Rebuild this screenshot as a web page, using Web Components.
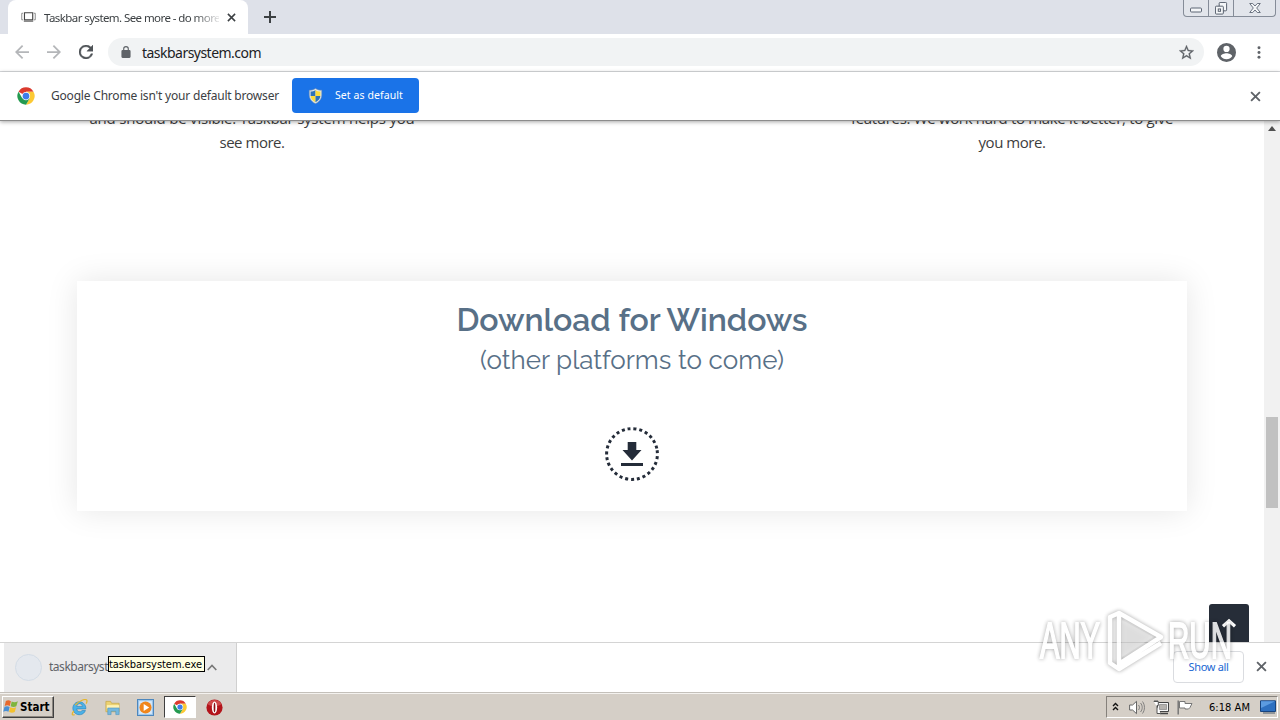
<!DOCTYPE html>
<html lang="en">
<head>
<meta charset="utf-8">
<title>Taskbar system. See more - do more</title>
<style>
  html, body { margin: 0; height: 100%; overflow: hidden; }
  body { font-family: "Noto Sans", "DejaVu Sans", sans-serif; }
</style>
</head>
<body>
<desktop-screen></desktop-screen>
<script>
const ICONS = {
  favicon: ['0 0 16 12', '<path d="M3.700 1.500h8.800v7.500H3.700z" fill="#fff" stroke="#444" stroke-width="1.200"/><path d="M3 10.500h10" stroke="#555"/><path d="M2.200 2H.8v7h1.400M13.800 2h1.400v7h-1.400" fill="none" stroke="#888"/>'],
  close: ['0 0 10 10', '<path d="M1 1l8 8M9 1L1 9" stroke="currentColor" stroke-width="1.7"/>'],
  plus: ['0 0 12 12', '<path d="M6 0v12M0 6h12" stroke="currentColor" stroke-width="2"/>'],
  back: ['4 4 16 16', '<path d="M20 11H7.830l5.590-5.590L12 4l-8 8 8 8 1.410-1.410L7.830 13H20z" fill="currentColor"/>'],
  forward: ['4 4 16 16', '<path d="M12 4l-1.410 1.410L16.170 11H4v2h12.170l-5.580 5.590L12 20l8-8z" fill="currentColor"/>'],
  reload: ['4 4 16 16', '<path d="M17.650 6.350A8 8 0 1 0 19.730 14h-2.080A6 6 0 1 1 12 6c1.660 0 3.140.69 4.220 1.780L13 11h7V4z" fill="currentColor" stroke="currentColor" stroke-width=".5"/>'],
  lock: ['4 1 16 21', '<path d="M18 8h-1V6A5 5 0 0 0 7 6v2H6a2 2 0 0 0-2 2v10a2 2 0 0 0 2 2h12a2 2 0 0 0 2-2V10a2 2 0 0 0-2-2zM9 8V6a3 3 0 0 1 6 0v2z" fill="currentColor"/>'],
  star: ['2 2 20 20', '<path d="M22 9.240l-7.190-.62L12 2 9.190 8.630 2 9.240l5.460 4.730L5.820 21 12 17.270 18.180 21l-1.630-7.030zM12 15.400l-3.760 2.270 1-4.280-3.320-2.880 4.380-.38L12 6.100l1.710 4.040 4.380.38-3.320 2.880 1 4.280z" fill="currentColor" stroke="currentColor" stroke-width=".3"/>'],
  avatar: ['2 2 20 20', '<path d="M12 2a10 10 0 1 0 0 20 10 10 0 0 0 0-20zm0 3a3.300 3.300 0 1 1 0 6.600A3.300 3.300 0 0 1 12 5zm0 14.200a7.200 7.200 0 0 1-6-3.220c.03-2 4-3.080 6-3.080s5.970 1.090 6 3.080a7.200 7.200 0 0 1-6 3.220z" fill="currentColor"/>'],
  dots: ['0 0 4 14', '<g fill="currentColor"><circle cx="2" cy="2" r="1.600"/><circle cx="2" cy="7" r="1.600"/><circle cx="2" cy="12" r="1.600"/></g>'],
  chrome: ['0 0 48 48', '<circle cx="24" cy="24" r="23" fill="#fff"/><path d="M24 24L4.080 12.500A23 23 0 0 1 43.920 12.500H24z" fill="#db3a2e"/><path d="M43.920 12.500A23 23 0 0 1 24 47L34 29.750 24 12.500z" fill="#fcc934"/><path d="M4.080 12.500A23 23 0 0 0 24 47l10-17.250H14z" fill="#249a50"/><circle cx="24" cy="24" r="11" fill="#fff"/><circle cx="24" cy="24" r="9" fill="#3d7de8"/>'],
  shield: ['0 0 16 18', '<path d="M8 .5c2.500 1.800 5 2 7 2v5c0 5-3 8-7 10-4-2-7-5-7-10v-5c2 0 4.500-.2 7-2z" fill="#dfe6ec" stroke="#7d92a8" stroke-width=".6"/><path d="M8 2.200V9H2.500V4C4.500 3.900 6.500 3.300 8 2.200z" fill="#2c72ba"/><path d="M8 2.200V9h5.500V4C11.500 3.900 9.500 3.300 8 2.200z" fill="#fbdc3c"/><path d="M8 9H2.500c.3 3.200 2.500 5.500 5.500 7z" fill="#fbdc3c"/><path d="M8 9h5.500c-.3 3.200-2.500 5.500-5.500 7z" fill="#2c72ba"/>'],
  minimize: ['0 0 12 6', '<rect x=".5" y="1" width="11" height="4" rx="1" fill="#f4f6f8" stroke="#5d6674"/>'],
  restore: ['0 0 14 14', '<g fill="#f4f6f8" stroke="#4f5866"><rect x="4.500" y=".5" width="8" height="9" rx="1"/><rect x=".5" y="4.500" width="8.500" height="8.500" rx="1"/><rect x="3.500" y="7.500" width="2.500" height="2.500"/></g>'],
  winclose: ['0 0 12 10', '<path d="M.7.5h3L6 3 8.300.5h3L7.700 5l3.600 4.500h-3L6 7 3.700 9.500h-3L4.300 5z" fill="#f4f6f8" stroke="#5f6876" stroke-width=".9"/>'],
  download: ['0 0 54 54', '<circle cx="27" cy="27" r="25.400" fill="none" stroke="#242c39" stroke-width="3" stroke-dasharray="3 2.911" transform="rotate(-8.500 27 27)"/><path d="M22.700 15h8.600v8H36.500L27 33.500 17.500 23h5.200zM16 36h22v3H16z" fill="#242c39"/>'],
  up: ['0 0 16 10', '<path d="M2 8.300L8 3l6 5.300" fill="none" stroke="currentColor" stroke-width="3.200"/>'],
  chevron: ['0 0 10 7', '<path d="M.7 6L5 1.500 9.300 6" fill="none" stroke="currentColor" stroke-width="1.600"/>'],
  flagwin: ['0 0 18 17', '<path d="M3 2.200c2-1.200 3.500-1 5.400.1L7.200 7.500C5.500 6.500 3.700 6.500 1.800 7.500z" fill="#e8692d"/><path d="M9.200 2.700c2 1.200 4 1.100 6.500-.2l-1.600 5.200c-2 1.100-4 1-6 0z" fill="#7fb53c"/><path d="M1.600 8.300c2-1 3.700-.9 5.400.1l-1.200 5.100c-1.800-1.200-3.600-1.100-5.500 0z" fill="#4a8fd4"/><path d="M7.700 8.700c2.200 1 4 1 6.200 0l-1.500 5c-2 1.100-4 1.100-6-.2z" fill="#f3c12f"/>'],
  ie: ['0 0 18 18', '<path d="M15.700 10.500H6a3.200 3.200 0 0 0 5.800 1.700h3.500A6.900 6.900 0 1 1 15.700 10.500zM6.100 7.900h6a3 3 0 0 0-6 0z" fill="#4bb2e8" stroke="#1f7dba" stroke-width=".6"/><path d="M3 12.700C.3 16 1 17.700 3.800 16.600M4.500 6.300C9 1.700 15.200-.6 16.700 1.200c.5.900.2 2.200-.6 3.700" fill="none" stroke="#e5b62d" stroke-width="1.300"/>'],
  explorer: ['0 0 18 17', '<path d="M2 2h5l1 2h8v9H2z" fill="#ecd272" stroke="#c4a343" stroke-width=".7"/><path d="M3 6h13v4H3z" fill="#fff3b4"/><path d="M4 9h12v7h-3.500v-3.500h-5V16H4z" fill="#75b8de" stroke="#4b91bd" stroke-width=".6"/>'],
  media: ['0 0 16 16', '<path d="M.5.5h15v15H.5z" fill="#9fc9ee" stroke="#4d87bd"/><path d="M2 2h12v12H2z" fill="#d7eafa"/><circle cx="8" cy="8" r="5.700" fill="#f0861c"/><path d="M6.300 4.800L11.500 8l-5.200 3.200z" fill="#fff"/>'],
  opera: ['0 0 16 16', '<circle cx="8" cy="8" r="7.600" fill="#b3141b"/><path d="M1.500 5a7.200 7.200 0 0 1 13 0c-3 2.500-10 2.500-13 0z" fill="#cf4a4b"/><ellipse cx="8" cy="8" rx="2.500" ry="5.700" fill="#fff"/><ellipse cx="8" cy="8" rx=".8" ry="4.500" fill="#8d1016"/>'],
  more: ['0 0 7 9', '<path d="M1 4l2.500-2.500L6 4M1 8l2.500-2.500L6 8" fill="none" stroke="#111" stroke-width="1.400"/>'],
  speaker: ['0 0 16 14', '<path d="M.6 4.500h3L7.500.8v12.400L3.600 9.500h-3z" fill="#fff" stroke="#666"/><path d="M9.500 4.500c1.300 1.500 1.300 3.500 0 5M11.500 2.500c2.300 2.600 2.300 6.400 0 9M13.500 1c2.600 3.500 2.600 8.500 0 12" fill="none" stroke="#777" stroke-width=".9"/>'],
  network: ['0 0 16 15', '<path d="M4.500 2.500h11v9h-11z" fill="#f4f4f4" stroke="#444"/><path d="M6.500 4.500h7v5h-7z" fill="#b5b2ae" stroke="#777" stroke-width=".6"/><path d="M7 13.500h8" stroke="#444" stroke-width="1.500"/><path d="M.7 1.500h4.600v4H4v8h3.500v-1" fill="#fff" stroke="#555"/><path d="M2 0v1.500M4 0v1.500" stroke="#555"/>'],
  flag: ['0 0 16 15', '<path d="M1.200.5v14" stroke="#777" stroke-width="1.500"/><path d="M2.500 1.500h5.500v2h7l-2 4-1.500 1.500H8V8H2.500z" fill="#fff" stroke="#777"/>'],
  monitor: ['0 0 16 14', '<path d="M.5.8h15v10.700H.5z" fill="#2e70c0" stroke="#17447f"/><path d="M1 1.300h14L1 8z" fill="#5c9be0"/><path d="M3 13h12" stroke="#6b7680" stroke-width="1.300"/>']
};

class UiIcon extends HTMLElement {
  constructor() {
    super();
    this.attachShadow({ mode: 'open' });
  }
  connectedCallback() {
    const [box, body] = ICONS[this.getAttribute('name')];
    this.shadowRoot.innerHTML = `
      <style>
        :host { display: block; flex: none; }
        svg { display: block; width: 100%; height: 100%; }
      </style>
      <svg viewBox="${box}">${body}</svg>
    `;
  }
}
customElements.define('ui-icon', UiIcon);

// Spreads one line of text over a given width by its letter spacing
class FitText extends HTMLElement {
  constructor() {
    super();
    this.attachShadow({ mode: 'open' });
    this.shadowRoot.innerHTML = `
      <style>
        :host { display: block; flex: none; white-space: nowrap; }
        span { display: inline-block; }
      </style>
      <span><slot></slot></span>
    `;
  }
  connectedCallback() {
    const width = Number(this.getAttribute('width'));
    const span = this.shadowRoot.querySelector('span');
    const count = this.textContent.length;
    const natural = span.getBoundingClientRect().width;
    this.style.width = width + 'px';
    span.style.letterSpacing = ((width - natural) / count) + 'px';
  }
}
customElements.define('fit-text', FitText);

class TabStrip extends HTMLElement {
  constructor() {
    super();
    this.attachShadow({ mode: 'open' });
    this.shadowRoot.innerHTML = `
      <style>
        :host { display: flex; height: 34px; background: #dee1e9; padding-left: 8px; box-sizing: border-box; }
        .tab {
          display: flex; align-items: center; width: 240px; height: 34px; box-sizing: border-box;
          padding-left: 13px; background: #fff; border-radius: 8px 8px 0 0; color: #3c4043;
        }
        .title {
          width: 175px; margin-left: 8px; margin-right: 8px; overflow: hidden; font-size: 11.500px;
          -webkit-mask-image: linear-gradient(90deg, #000 150px, transparent 178px);
        }
        .controls {
          display: flex; height: 17px; margin-left: auto; margin-right: 4px; box-sizing: border-box;
          border: 1px solid #858c98; border-top: 0; border-radius: 0 0 4px 4px; background: #e2e5eb;
        }
        .controls div { display: flex; align-items: center; justify-content: center; width: 24px; border-right: 1px solid #858c98; }
        .controls div:last-child { width: 41px; border: 0; }
        .fav { width: 15px; height: 12px; }
        .x { width: 9px; height: 9px; }
        .plus { width: 12px; height: 12px; margin: 11px 0 0 16px; color: #3c4043; }
        .min { width: 12px; height: 6px; margin-top: 4px; }
        .res { width: 13px; height: 13px; }
        .wx { width: 12px; height: 10px; }
      </style>
      <div class="tab">
        <ui-icon class="fav" name="favicon"></ui-icon>
        <div class="title"><fit-text width="176">Taskbar system. See more - do more</fit-text></div>
        <ui-icon class="x" name="close"></ui-icon>
      </div>
      <ui-icon class="plus" name="plus"></ui-icon>
      <div class="controls">
        <div><ui-icon class="min" name="minimize"></ui-icon></div>
        <div><ui-icon class="res" name="restore"></ui-icon></div>
        <div><ui-icon class="wx" name="winclose"></ui-icon></div>
      </div>
    `;
  }
}
customElements.define('tab-strip', TabStrip);

class BrowserToolbar extends HTMLElement {
  constructor() {
    super();
    this.attachShadow({ mode: 'open' });
    this.shadowRoot.innerHTML = `
      <style>
        :host {
          display: flex; align-items: center; height: 38px; box-sizing: border-box; padding: 0 0 1px 15px;
          background: #fff; border-bottom: 1px solid #d9dbde; color: #5f6368;
        }
        .nav { width: 14px; height: 14px; margin-right: 18px; color: #b4b6b9; }
        .reload { width: 14px; height: 14px; color: #4f5357; }
        .omnibox {
          display: flex; align-items: center; width: 1096px; height: 28px; box-sizing: border-box;
          margin-left: 15px; padding: 0 10px 0 13px; border-radius: 14px; background: #f1f3f4;
        }
        .lock { width: 10px; height: 12px; }
        fit-text { margin-left: 11px; font-size: 14px; color: #202124; }
        .star { width: 15px; height: 15px; margin-left: auto; }
        .avatar { width: 19px; height: 19px; margin-left: 13px; }
        .dots { width: 4px; height: 13px; margin-left: 21px; }
      </style>
      <ui-icon class="nav" name="back"></ui-icon>
      <ui-icon class="nav" name="forward"></ui-icon>
      <ui-icon class="reload" name="reload"></ui-icon>
      <div class="omnibox">
        <ui-icon class="lock" name="lock"></ui-icon>
        <fit-text width="119">taskbarsystem.com</fit-text>
        <ui-icon class="star" name="star"></ui-icon>
      </div>
      <ui-icon class="avatar" name="avatar"></ui-icon>
      <ui-icon class="dots" name="dots"></ui-icon>
    `;
  }
}
customElements.define('browser-toolbar', BrowserToolbar);

class InfoBar extends HTMLElement {
  constructor() {
    super();
    this.attachShadow({ mode: 'open' });
    this.shadowRoot.innerHTML = `
      <style>
        :host {
          display: flex; align-items: center; position: relative; height: 49px; box-sizing: border-box;
          padding: 0 19px 0 17px; background: #fff; border-bottom: 1px solid #8c8c8c;
          box-shadow: 0 1px 4px rgba(0, 0, 0, .35); font-size: 12px; color: #3c4043;
        }
        .logo { width: 18px; height: 18px; margin-right: 16px; }
        .text { margin-bottom: 2px; }
        button {
          display: flex; align-items: center; width: 127px; height: 35px; margin: 0 0 1px 13px; padding: 0 0 0 16px;
          border: 0; border-radius: 4px; background: #1a73e8; color: #fff; font: 10.500px "Noto Sans", sans-serif;
        }
        .shield { width: 15px; height: 16px; margin-right: 12px; }
        button fit-text { margin-bottom: 1px; }
        .x { width: 11px; height: 11px; margin-left: auto; color: #5f6368; }
      </style>
      <ui-icon class="logo" name="chrome"></ui-icon>
      <fit-text class="text" width="228">Google Chrome isn't your default browser</fit-text>
      <button><ui-icon class="shield" name="shield"></ui-icon><fit-text width="68">Set as default</fit-text></button>
      <ui-icon class="x" name="close"></ui-icon>
    `;
  }
}
customElements.define('info-bar', InfoBar);

class FeatureText extends HTMLElement {
  constructor() {
    super();
    this.attachShadow({ mode: 'open' });
    this.shadowRoot.innerHTML = `
      <style>
        :host {
          display: flex; flex-direction: column; align-items: center; width: 380px;
          font: 15px/24px "Open Sans", "Noto Sans", sans-serif; color: #3d3d3d;
        }
      </style>
      <slot></slot>
    `;
  }
}
customElements.define('feature-text', FeatureText);

class DownloadCard extends HTMLElement {
  constructor() {
    super();
    this.attachShadow({ mode: 'open' });
    this.shadowRoot.innerHTML = `
      <style>
        :host {
          display: flex; flex-direction: column; align-items: center; width: 1110px; height: 230px; box-sizing: border-box;
          padding-top: 19px; background: #fff; box-shadow: 0 0 30px rgba(0, 0, 0, .1);
          font-family: Raleway, Lato, "Open Sans", sans-serif; color: #587087;
        }
        .title { font-size: 32px; line-height: 40px; font-weight: 600; }
        .sub { font-size: 26px; line-height: 40px; }
        ui-icon { width: 54px; height: 54px; margin-top: 47px; }
      </style>
      <fit-text class="title" width="351">Download for Windows</fit-text>
      <fit-text class="sub" width="304">(other platforms to come)</fit-text>
      <ui-icon name="download"></ui-icon>
    `;
  }
}
customElements.define('download-card', DownloadCard);

class ScrollBar extends HTMLElement {
  constructor() {
    super();
    this.attachShadow({ mode: 'open' });
    this.shadowRoot.innerHTML = `
      <style>
        :host { display: flex; flex-direction: column; align-items: center; width: 16px; background: #f1f1f1; }
        .arrow { border: 4px solid transparent; border-top: 0; border-bottom: 5px solid #505050; margin-top: 5px; }
        .thumb { width: 12px; height: 91px; margin-top: 286px; background: #c1c1c1; }
      </style>
      <div class="arrow"></div>
      <div class="thumb"></div>
    `;
  }
}
customElements.define('scroll-bar', ScrollBar);

class WebPage extends HTMLElement {
  constructor() {
    super();
    this.attachShadow({ mode: 'open' });
    this.shadowRoot.innerHTML = `
      <style>
        :host { display: flex; position: relative; height: 521px; overflow: hidden; background: #fff; }
        main { width: 1264px; display: flex; flex-direction: column; align-items: center; }
        .features { display: flex; justify-content: space-between; width: 1140px; margin: -15px 0 127px; }
        .top {
          position: absolute; left: 1209px; top: 483px; width: 40px; height: 40px; padding: 14px 0 0 12px;
          box-sizing: border-box; border-radius: 3px 3px 0 0; background: #262d38; color: #fff;
        }
        .top ui-icon { width: 16px; height: 10px; }
      </style>
      <main>
        <div class="features">
          <feature-text>
            <fit-text width="325">and should be visible. Taskbar system helps you</fit-text>
            <fit-text width="65">see more.</fit-text>
          </feature-text>
          <feature-text>
            <fit-text width="322">features. We work hard to make it better, to give</fit-text>
            <fit-text width="67">you more.</fit-text>
          </feature-text>
        </div>
        <download-card></download-card>
      </main>
      <scroll-bar></scroll-bar>
      <div class="top"><ui-icon name="up"></ui-icon></div>
    `;
  }
}
customElements.define('web-page', WebPage);

class DownloadShelf extends HTMLElement {
  constructor() {
    super();
    this.attachShadow({ mode: 'open' });
    this.shadowRoot.innerHTML = `
      <style>
        :host {
          display: flex; align-items: center; position: relative; height: 50px; box-sizing: border-box;
          padding: 0 13px 0 4px; background: #fff; border-top: 1px solid #d4d4d4; color: #5f6368;
        }
        .item {
          display: flex; align-items: center; width: 233px; height: 49px; box-sizing: border-box; padding: 0 0 1px 11px;
          background: #ebebec; border-right: 1px solid #d0d0d0; font-size: 12px;
        }
        .item fit-text { margin-bottom: 1px; }
        .ring { width: 27px; height: 27px; box-sizing: border-box; border: 1.500px solid #d3dce6; border-radius: 50%; background: #e4e8ee; margin-right: 7px; }
        .chev { width: 10px; height: 7px; margin-left: 99px; color: #777; }
        .all {
          display: flex; align-items: center; justify-content: center; width: 71px; height: 32px; box-sizing: border-box;
          margin-left: auto; margin-bottom: 2px; padding-bottom: 1px; border: 1px solid #dadce0; border-radius: 4px; color: #1967d2; font-size: 11px;
        }
        .x { width: 11px; height: 11px; margin: 0 0 2px 12px; }
        .tip {
          position: absolute; left: 108px; top: 13px; width: 97px; height: 16px; box-sizing: border-box;
          border: 1px solid #000; background: #ffffe1; color: #000; font: 11px/15px "DejaVu Sans Condensed", "DejaVu Sans", sans-serif;
        }
      </style>
      <div class="item">
        <div class="ring"></div>
        <fit-text width="59">taskbarsyst</fit-text>
        <ui-icon class="chev" name="chevron"></ui-icon>
      </div>
      <div class="all"><fit-text width="40">Show all</fit-text></div>
      <ui-icon class="x" name="close"></ui-icon>
      <div class="tip"><fit-text width="93">taskbarsystem.exe</fit-text></div>
    `;
  }
}
customElements.define('download-shelf', DownloadShelf);

class DesktopTaskbar extends HTMLElement {
  constructor() {
    super();
    this.attachShadow({ mode: 'open' });
    this.shadowRoot.innerHTML = `
      <style>
        :host {
          display: flex; align-items: center; height: 28px; box-sizing: border-box; padding: 1px 2px 0;
          background: #d5cfc7; border-top: 1px solid #c4c0ba; box-shadow: inset 0 1px #f4f2ef;
          font-family: "DejaVu Sans Condensed", "DejaVu Sans", sans-serif; font-size: 11.500px; color: #000;
        }
        .start {
          display: flex; align-items: center; width: 52px; height: 22px; box-sizing: border-box; font-weight: 700;
          border: 1px solid; border-color: #fff #404040 #404040 #fff; box-shadow: inset -1px -1px #8c8780;
        }
        .start ui-icon { width: 17px; height: 18px; }
        .apps { display: flex; align-items: center; margin-left: 17px; }
        .apps ui-icon { width: 17px; height: 17px; margin-right: 16px; }
        .active {
          display: flex; align-items: center; justify-content: center; width: 32px; height: 22px; box-sizing: border-box;
          margin: 0 10px 0 -6px; background: #fff; border: 1px solid; border-color: #404040 #fff #fff #404040;
        }
        .active ui-icon { width: 14px; height: 14px; margin: 0; }
        .tray {
          display: flex; align-items: center; width: 172px; height: 22px; box-sizing: border-box; margin-left: auto; padding-left: 5px;
          border: 1px solid; border-color: #85817b #fff #fff #85817b;
        }
        .more { width: 7px; height: 9px; margin: 0 10px 2px 0; }
        .tray .s { width: 16px; height: 15px; margin-right: 8px; }
        .clock { margin: 0 10px 0 8px; font-size: 11px; }
        .mon { width: 16px; height: 14px; }
      </style>
      <div class="start"><ui-icon name="flagwin"></ui-icon><fit-text width="29.500">Start</fit-text></div>
      <div class="apps">
        <ui-icon name="ie"></ui-icon>
        <ui-icon name="explorer"></ui-icon>
        <ui-icon name="media"></ui-icon>
        <div class="active"><ui-icon name="chrome"></ui-icon></div>
        <ui-icon name="opera"></ui-icon>
      </div>
      <div class="tray">
        <ui-icon class="more" name="more"></ui-icon>
        <ui-icon class="s" name="speaker"></ui-icon>
        <ui-icon class="s" name="network"></ui-icon>
        <ui-icon class="s" name="flag"></ui-icon>
        <fit-text class="clock" width="41">6:18 AM</fit-text>
        <ui-icon class="mon" name="monitor"></ui-icon>
      </div>
    `;
  }
}
customElements.define('desktop-taskbar', DesktopTaskbar);

class WaterMark extends HTMLElement {
  constructor() {
    super();
    this.attachShadow({ mode: 'open' });
    this.shadowRoot.innerHTML = `
      <style>
        :host { display: block; position: absolute; left: 1034px; top: 604px; width: 204px; height: 72px; pointer-events: none; opacity: .85; }
        svg { display: block; overflow: visible; filter: drop-shadow(0 0 2px rgba(0, 0, 0, .42)); }
        text { font: 50px "Liberation Sans", sans-serif; stroke: #fff; stroke-width: 1.800px; }
      </style>
      <svg width="204" height="72" fill="#fff">
        <text x="6" y="54" textLength="60" lengthAdjust="spacingAndGlyphs">ANY</text>
        <text x="134" y="54" textLength="64" lengthAdjust="spacingAndGlyphs">RUN</text>
        <g fill="none" stroke="#fff" stroke-width="4.500" stroke-linejoin="round">
          <path d="M85 9l42 24-42 27zM85 9l-9 4v46l9 6 42-26"/>
          <path d="M85 21v27" stroke-width="3"/>
        </g>
        <path d="M88 16l31 17-31 20z" fill="#e6e6e6" fill-opacity=".5"/>
      </svg>
    `;
  }
}
customElements.define('water-mark', WaterMark);

class DesktopScreen extends HTMLElement {
  constructor() {
    super();
    this.attachShadow({ mode: 'open' });
    this.shadowRoot.innerHTML = `
      <style>
        :host { display: flex; flex-direction: column; position: relative; width: 1280px; height: 720px; overflow: hidden; }
        info-bar { z-index: 1; }
      </style>
      <tab-strip></tab-strip>
      <browser-toolbar></browser-toolbar>
      <info-bar></info-bar>
      <web-page></web-page>
      <download-shelf></download-shelf>
      <desktop-taskbar></desktop-taskbar>
      <water-mark></water-mark>
    `;
  }
}
customElements.define('desktop-screen', DesktopScreen);
</script>
</body>
</html>
